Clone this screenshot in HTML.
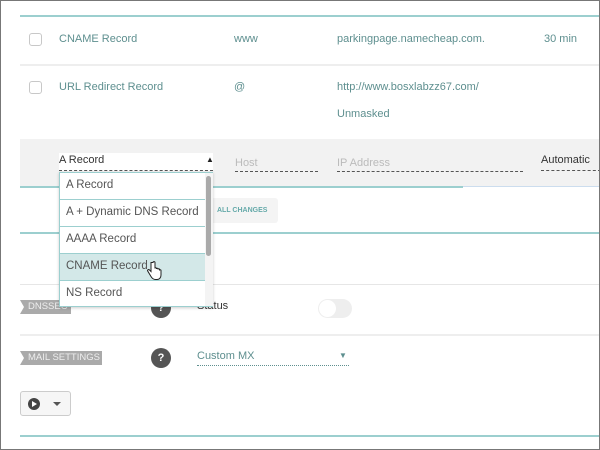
<!DOCTYPE html>
<html><head><style>
*{margin:0;padding:0;box-sizing:border-box}
body{width:600px;height:450px;background:#fff;font-family:"Liberation Sans",sans-serif;position:relative;overflow:hidden}
.frame{position:absolute;left:0;top:0;width:600px;height:450px;border:1px solid #777;z-index:10;pointer-events:none}
.a{position:absolute;white-space:nowrap}
.t{color:#5e8f8f;font-size:11px}
.hl{position:absolute;left:20px;right:0;height:2px;background:#9ccfcf}
.gl{position:absolute;left:20px;right:0;height:1px;background:#e6e6e6}
.cb{position:absolute;width:13px;height:13px;border:1px solid #c8c8c8;border-radius:3px;left:29px}
.dash{position:absolute;border-bottom:1px dashed #555;height:1px}
.tag{position:absolute;left:20px;height:14px;background:#aaa;color:#eee;font-size:9.5px;line-height:14px;padding-left:8px;clip-path:polygon(0 0,100% 0,100% 100%,0 100%,4px 50%)}
.q{position:absolute;width:20px;height:20px;border-radius:50%;background:#555;color:#fff;font-size:11px;font-weight:bold;text-align:center;line-height:20px}
.dd{position:absolute;left:59px;top:172px;width:154px;height:135px;background:#fff;border:1px solid #9ccfcf;box-shadow:0 1px 3px rgba(0,0,0,.2);z-index:5}
.it{height:27px;border-bottom:1px solid #9ccfcf;font-size:11.5px;color:#555;line-height:25px;padding-left:6px;width:145px;white-space:nowrap}
</style></head><body>
<div class="frame"></div>
<div class="hl" style="top:15px"></div>
<div class="cb" style="top:33px"></div>
<div class="a t" style="left:59px;top:33px">CNAME Record</div>
<div class="a t" style="left:234px;top:33px">www</div>
<div class="a t" style="left:337px;top:33px">parkingpage.namecheap.com.</div>
<div class="a t" style="left:544px;top:33px">30 min</div>
<div class="gl" style="top:64px;height:2px;background:#eee"></div>
<div class="cb" style="top:81px"></div>
<div class="a t" style="left:59px;top:81px">URL Redirect Record</div>
<div class="a t" style="left:234px;top:81px">@</div>
<div class="a t" style="left:337px;top:81px">http://www.bosxlabzz67.com/</div>
<div class="a t" style="left:337px;top:108px">Unmasked</div>
<div class="a" style="left:20px;top:139px;width:580px;height:48px;background:#f2f2f2"></div>
<div class="a" style="left:59px;top:153px;width:154px;height:18px;background:#fff"></div>
<div class="a" style="left:59px;top:154px;font-size:11px;color:#333">A Record</div>
<div class="a" style="left:206px;top:155px;font-size:8px;color:#222">▲</div>
<div class="dash" style="left:59px;top:170px;width:154px"></div>
<div class="a" style="left:235px;top:157px;font-size:11px;color:#bbb">Host</div>
<div class="dash" style="left:235px;top:171px;width:83px"></div>
<div class="a" style="left:337px;top:157px;font-size:11px;color:#bbb">IP Address</div>
<div class="dash" style="left:337px;top:171px;width:186px"></div>
<div class="a" style="left:541px;top:154px;font-size:11px;color:#333">Automatic</div>
<div class="dash" style="left:541px;top:170px;width:60px"></div>
<div class="a" style="left:20px;top:186px;width:443px;height:2px;background:#9ccfcf"></div>
<div class="a" style="left:463px;top:186px;width:137px;height:1px;background:#cde"></div>
<div class="a" style="left:190px;top:198px;width:88px;height:25px;background:#f4f4f4;border-radius:3px;color:#6aa;font-size:7px;line-height:25px;padding-left:27px;font-weight:bold">ALL CHANGES</div>
<div class="hl" style="top:232px"></div>
<div class="gl" style="top:284px"></div>
<div class="tag" style="top:300px;width:51px">DNSSEC</div>
<div class="q" style="left:151px;top:298px">?</div>
<div class="a" style="left:197px;top:300px;font-size:11px;color:#333">Status</div>
<div class="a" style="left:318px;top:299px;width:34px;height:19px;border-radius:10px;background:#eee"><div style="position:absolute;left:1px;top:1px;width:17px;height:17px;border-radius:50%;background:#fff"></div></div>
<div class="gl" style="top:334px;height:2px;background:#eee"></div>
<div class="tag" style="top:351px;width:82px">MAIL SETTINGS</div>
<div class="q" style="left:151px;top:348px">?</div>
<div class="a" style="left:197px;top:350px;font-size:11px;color:#5e8f8f">Custom MX</div>
<div class="a" style="left:339px;top:351px;font-size:8px;color:#5e8f8f">▼</div>
<div class="a" style="left:197px;top:365px;width:152px;border-bottom:1px dotted #5e8f8f"></div>
<div class="a" style="left:20px;top:391px;width:51px;height:25px;border:1px solid #ccc;border-radius:3px;background:#f6f6f6">
<div style="position:absolute;left:7px;top:6px;width:12px;height:12px;border-radius:50%;background:#444"></div>
<div style="position:absolute;left:11px;top:9px;width:0;height:0;border-left:5px solid #fff;border-top:3px solid transparent;border-bottom:3px solid transparent"></div>
<div style="position:absolute;left:32px;top:10px;width:0;height:0;border-top:4px solid #555;border-left:4px solid transparent;border-right:4px solid transparent"></div>
</div>
<div class="hl" style="top:435px"></div>
<div class="dd">
<div class="it">A Record</div>
<div class="it">A + Dynamic DNS Record</div>
<div class="it">AAAA Record</div>
<div class="it" style="background:#d3e8e8">CNAME Record</div>
<div class="it" style="border:none">NS Record</div>
<div style="position:absolute;left:145px;top:0;width:8px;height:133px;background:#f4f4f4"></div>
<div style="position:absolute;left:146px;top:3px;width:5px;height:80px;border-radius:3px;background:#aaa"></div>
<svg style="position:absolute;left:86px;top:88px" width="16" height="20" viewBox="0 0 16 20"><path d="M5 1.5v9l-1.5-1.5c-1-1-2.5 0-1.7 1.2l3.2 5.3c1 1.7 2.2 3 4.5 3h1.5c2.5 0 4-2 4-4.5v-4.5c0-1-1.5-1-1.5 0v-1c0-1-1.5-1-1.5 0v-.5c0-1-1.5-1-1.5 0v-.5c0-1-1.5-1-1.5 0V1.5c0-1.2-2-1.2-2 0z" fill="#fff" stroke="#222" stroke-width="1"/></svg>
</div>
</body></html>
